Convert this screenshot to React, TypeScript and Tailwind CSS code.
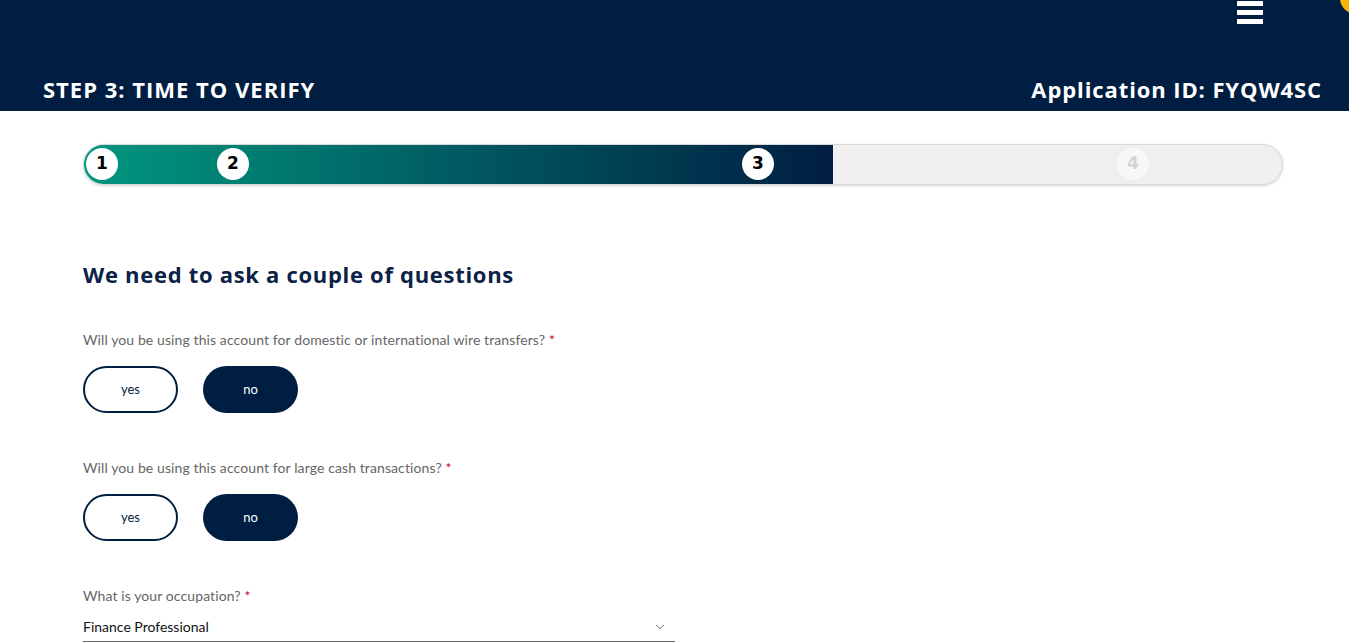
import { ChevronDown } from "lucide-react";

const heading = { fontFamily: '"Open Sans", "Liberation Sans", sans-serif' };
const body = { fontFamily: 'Lato, "Liberation Sans", sans-serif' };

function Question({ label }: { label: string }) {
  return (
    <div className="flex flex-col">
      <p className="text-[14px] leading-[18px] tracking-[0.1px] text-[#666666]" style={body}>
        {label} <span className="text-[#d0021b]">*</span>
      </p>
      <div className="mt-[17px] flex gap-[25px]">
        <button className="h-[47px] w-[95px] rounded-full border-2 border-[#001e41] bg-white text-[13px] text-[#001e41]">
          yes
        </button>
        <button className="h-[47px] w-[95px] rounded-full bg-[#001e41] text-[13px] text-white">
          no
        </button>
      </div>
    </div>
  );
}

export default function App() {
  const steps = [
    { n: 1, left: 2, done: true },
    { n: 2, left: 133, done: true },
    { n: 3, left: 658, done: true },
    { n: 4, left: 1033, done: false },
  ];

  return (
    <div className="min-h-[643px] w-[1366px] bg-white">
      <div className="w-[1349px] overflow-hidden">
        {/* Header */}
        <header className="relative flex h-[111px] items-end justify-between bg-[#001e41] pb-[7px] pl-[43px] pr-[27px] text-white" style={heading}>
          <div className="absolute left-[1237px] top-[1px] flex w-[26px] flex-col gap-[4px]">
            <span className="h-[5px] bg-white" />
            <span className="h-[5px] bg-white" />
            <span className="h-[5px] bg-white" />
          </div>
          <span className="absolute left-[1340px] top-[-18px] h-[32px] w-[32px] rounded-full bg-[#f5b400]" />
          <h1 className="text-[22px] font-bold leading-[30px] tracking-[1px]">STEP 3: TIME TO VERIFY</h1>
          <p className="text-[22px] font-bold leading-[30px] tracking-[0.9px]">Application ID: FYQW4SC</p>
        </header>

        <main className="px-[83px] pt-[33px] pb-10">
          {/* Progress */}
          <div className="relative h-[41px] w-[1200px] overflow-hidden rounded-full border border-[#d9d9d9] bg-[#efefef] shadow-[0_1px_3px_rgba(0,0,0,0.15)]">
            <div className="h-full w-[749px] bg-[linear-gradient(to_right,#00967f_0%,#007a70_25%,#00545f_55%,#001e41_100%)]" />
            {steps.map((s) => (
              <span
                key={s.n}
                className={
                  s.done
                    ? "absolute top-[3px] flex h-[32px] w-[32px] items-center justify-center rounded-full bg-white text-[17px] font-bold text-black"
                    : "absolute top-[3px] flex h-[32px] w-[32px] items-center justify-center rounded-full bg-[#f7f7f7] text-[17px] font-bold text-[#d4d4d4]"
                }
                style={{ left: s.left, fontFamily: '"DejaVu Sans", sans-serif' }}
              >
                {s.n}
              </span>
            ))}
          </div>

          <h2 className="mt-[75px] text-[22px] font-bold leading-[28px] tracking-[0.7px] text-[#0b2145]" style={heading}>
            We need to ask a couple of questions
          </h2>

          <div className="mt-[43px] flex flex-col gap-[46px]" style={body}>
            <Question label="Will you be using this account for domestic or international wire transfers?" />
            <Question label="Will you be using this account for large cash transactions?" />
            <div className="flex w-[592px] flex-col">
              <p className="text-[14px] leading-[18px] tracking-[0.1px] text-[#666666]">
                What is your occupation? <span className="text-[#d0021b]">*</span>
              </p>
              <div className="mt-[11px] flex items-center justify-between border-b border-[#666666] pb-[4px]">
                <span className="text-[14px] text-[#111111]">Finance Professional</span>
                <ChevronDown className="mr-[8px] h-[14px] w-[14px] text-[#555555]" strokeWidth={1.5} />
              </div>
            </div>
          </div>
        </main>
      </div>
    </div>
  );
}
